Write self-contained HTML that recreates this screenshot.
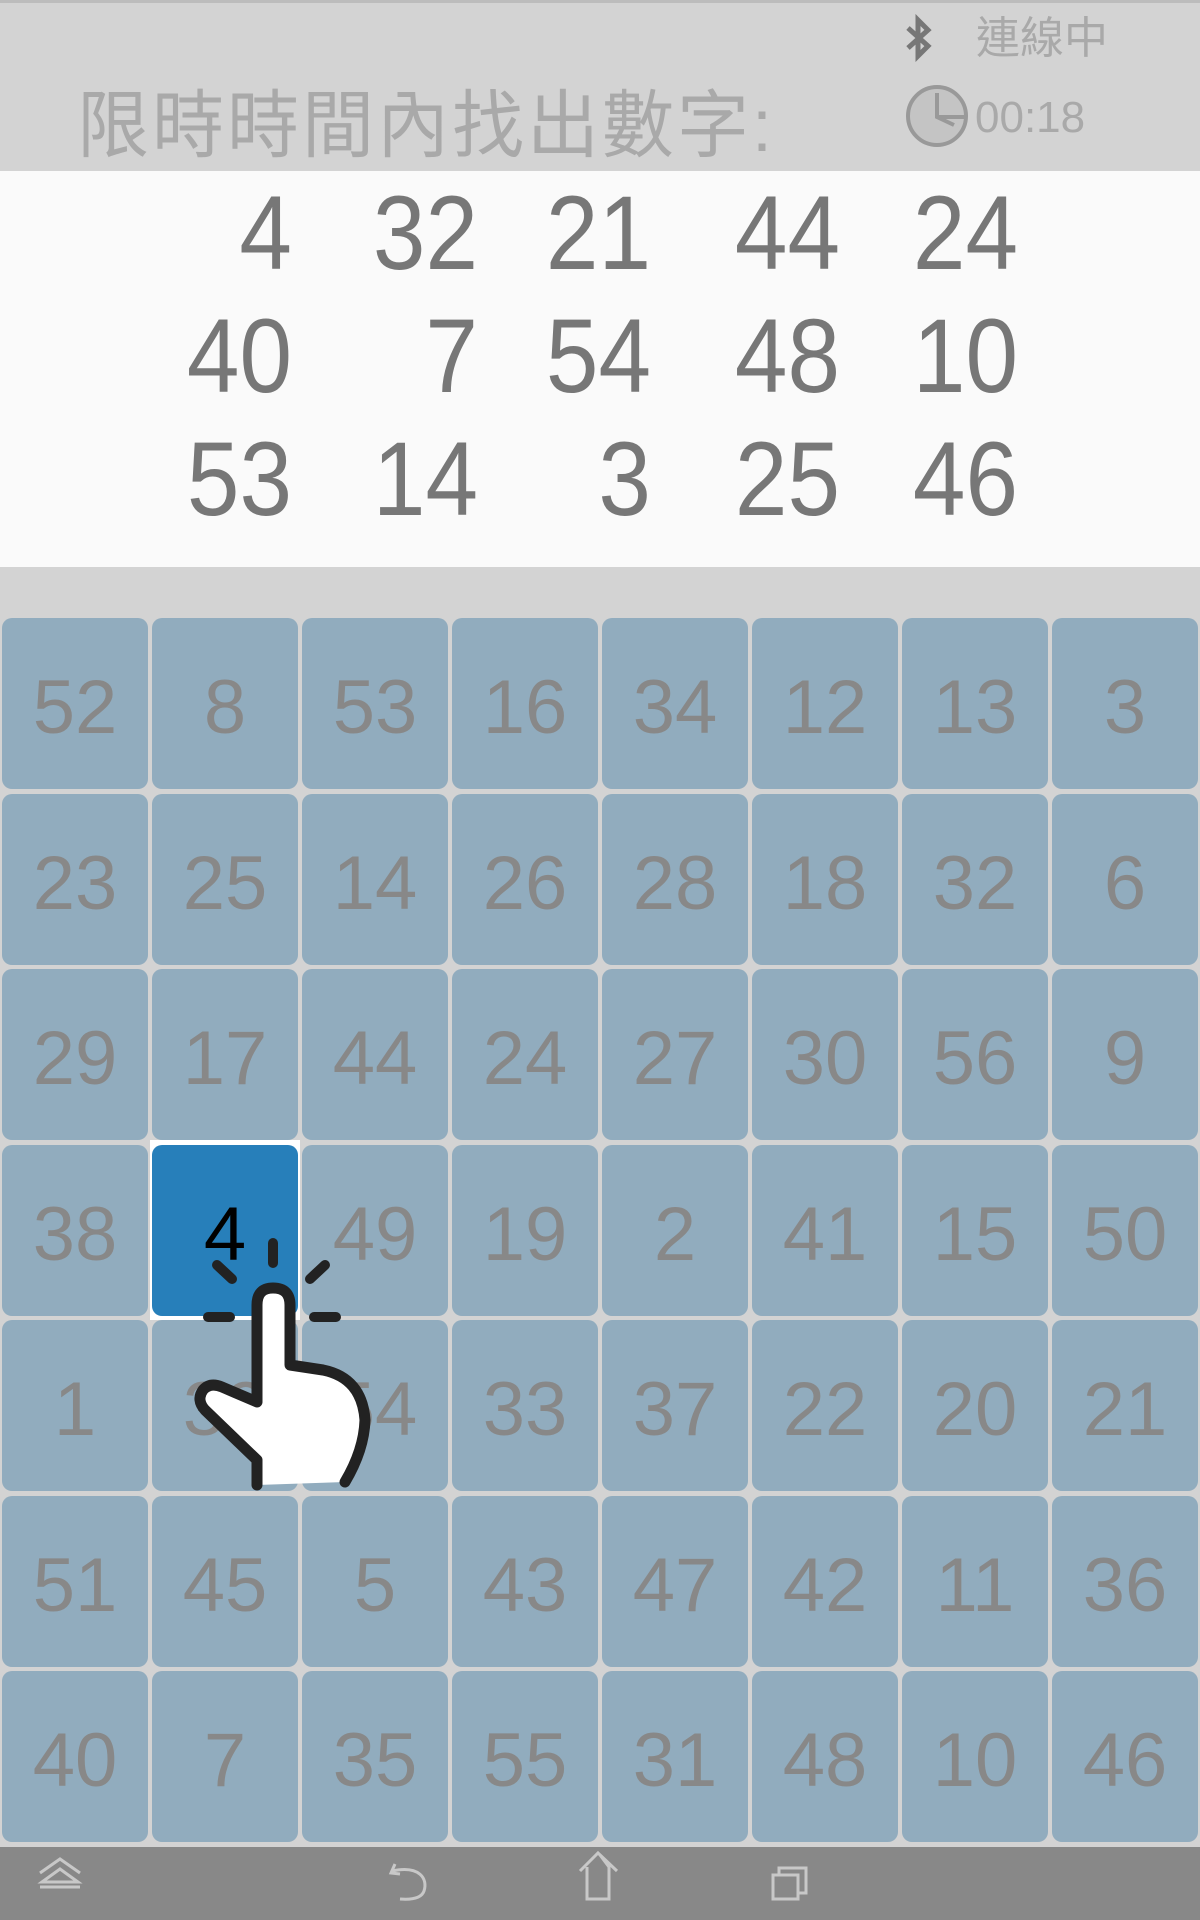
<!DOCTYPE html>
<html><head><meta charset="utf-8"><style>
body{margin:0;width:1200px;height:1920px;position:relative;background:#d3d3d3;overflow:hidden;font-family:"Liberation Sans","Noto Sans CJK TC",sans-serif}
.a{position:absolute}
.top{left:0;top:0;width:1200px;height:171px;background:#d3d3d3;border-top:3px solid #bcbcbc;box-sizing:border-box}
.title{left:77px;top:80px;font-size:72px;color:#a9a9a9;letter-spacing:3px;line-height:90px;white-space:nowrap;transform:scaleY(1.03);transform-origin:top left}
.white{left:0;top:171px;width:1200px;height:396px;background:#fafafa}
.n{font-size:105px;color:#777;line-height:1;text-align:right;width:200px;transform:scaleX(0.9);transform-origin:right}
.cell{position:absolute;width:146px;height:171px;background:#91acbe;border-radius:10px;color:#888;font-size:76px;text-align:center;line-height:179px}
.nav{left:0;top:1847px;width:1200px;height:73px;background:#888}
</style></head><body>
<div class="a top"></div>
<div class="a title">限時時間內找出數字:</div>
<svg class="a" style="left:900px;top:14px" width="40" height="48" viewBox="0 0 40 48"><path d="M8 14 L28 32 L18 42 L18 6 L28 16 L8 34" fill="none" stroke="#777" stroke-width="5"/></svg>
<div class="a" style="left:976px;top:14px;font-size:44px;color:#a9a9a9;line-height:50px">連線中</div>
<svg class="a" style="left:904px;top:83px" width="66" height="66" viewBox="0 0 66 66"><circle cx="33" cy="33" r="29" fill="#c4c4c4" stroke="#999" stroke-width="4"/><path d="M33 10 V34 L50 42 M33 34 H62" stroke="#999" stroke-width="4" fill="none"/></svg>
<div class="a" style="left:975px;top:93px;font-size:44px;color:#a9a9a9;line-height:50px">00:18</div>
<div class="a white"></div>
<div id="nums"></div>
<div id="grid"></div>
<div class="a nav"></div>
<svg class="a" style="left:0;top:1847px" width="1200" height="73" viewBox="0 0 1200 73" fill="none" stroke="#c8c8c8" stroke-width="3">
<path d="M40 26 L60 12 L80 26 M42 35 L60 22 L78 35 Z M40 40 H80"/>
<path d="M395 17 L391 26 L400 27 M392 24 C420 18 428 32 424 44 C422 50 414 53 400 52"/>
<path d="M580 24 L598 6 L617 24 M587 20 V52 H609 V20 L600 8"/>
<path d="M773 28 H798 V52 H773 Z M779 28 V21 H806 V46 H798"/>
</svg>
<svg class="a" style="left:0;top:0;z-index:5" width="1200" height="1920">
<g stroke="#222" stroke-width="10" stroke-linecap="round" fill="none">
<path d="M273 1243 V1263"/><path d="M217 1265 L232 1279"/><path d="M310 1279 L325 1265"/><path d="M208 1317 H230"/><path d="M314 1317 H336"/>
</g>
<path d="M257 1402 V1300 Q257 1290 273 1290 Q290 1290 290 1300 V1365 L323 1370 Q365 1380 365 1417 Q362 1450 345 1482 L257 1485 V1460 L200 1410 Q195 1395 205 1388 Q212 1382 222 1387 Z" fill="#fff"/>
<path d="M257 1402 V1305 Q257 1288 273 1288 Q290 1288 290 1305 V1365 L323 1370 Q362 1378 365 1420 Q364 1450 345 1482 M257 1402 L222 1387 Q210 1382 203 1390 Q196 1400 205 1410 L257 1460 V1485" fill="none" stroke="#222" stroke-width="11" stroke-linecap="round" stroke-linejoin="round"/>
</svg>
<script>
var L=[[4,32,21,44,24],[40,7,54,48,10],[53,14,3,25,46]],R=[292,478,651,840,1018],T=[194,317,440],h='';
for(var r=0;r<3;r++)for(var c=0;c<5;c++)h+='<div class="a n" style="left:'+(R[c]-200)+'px;top:'+(T[r]-13)+'px">'+L[r][c]+'</div>';
document.getElementById('nums').innerHTML=h;
var G=[[52,8,53,16,34,12,13,3],[23,25,14,26,28,18,32,6],[29,17,44,24,27,30,56,9],[38,4,49,19,2,41,15,50],[1,39,54,33,37,22,20,21],[51,45,5,43,47,42,11,36],[40,7,35,55,31,48,10,46]],g='';
for(var r=0;r<7;r++)for(var c=0;c<8;c++){var x=2+c*150,y=Math.round(618+r*175.5);
if(r==3&&c==1){g+='<div class="a" style="left:150px;top:'+(y-5)+'px;width:150px;height:180px;background:#fff"></div><div class="cell" style="left:152px;top:'+y+'px;background:#277fba;color:#000;">4</div>';}
else g+='<div class="cell" style="left:'+x+'px;top:'+y+'px">'+G[r][c]+'</div>';}
document.getElementById('grid').innerHTML=g;
</script>
</body></html>
